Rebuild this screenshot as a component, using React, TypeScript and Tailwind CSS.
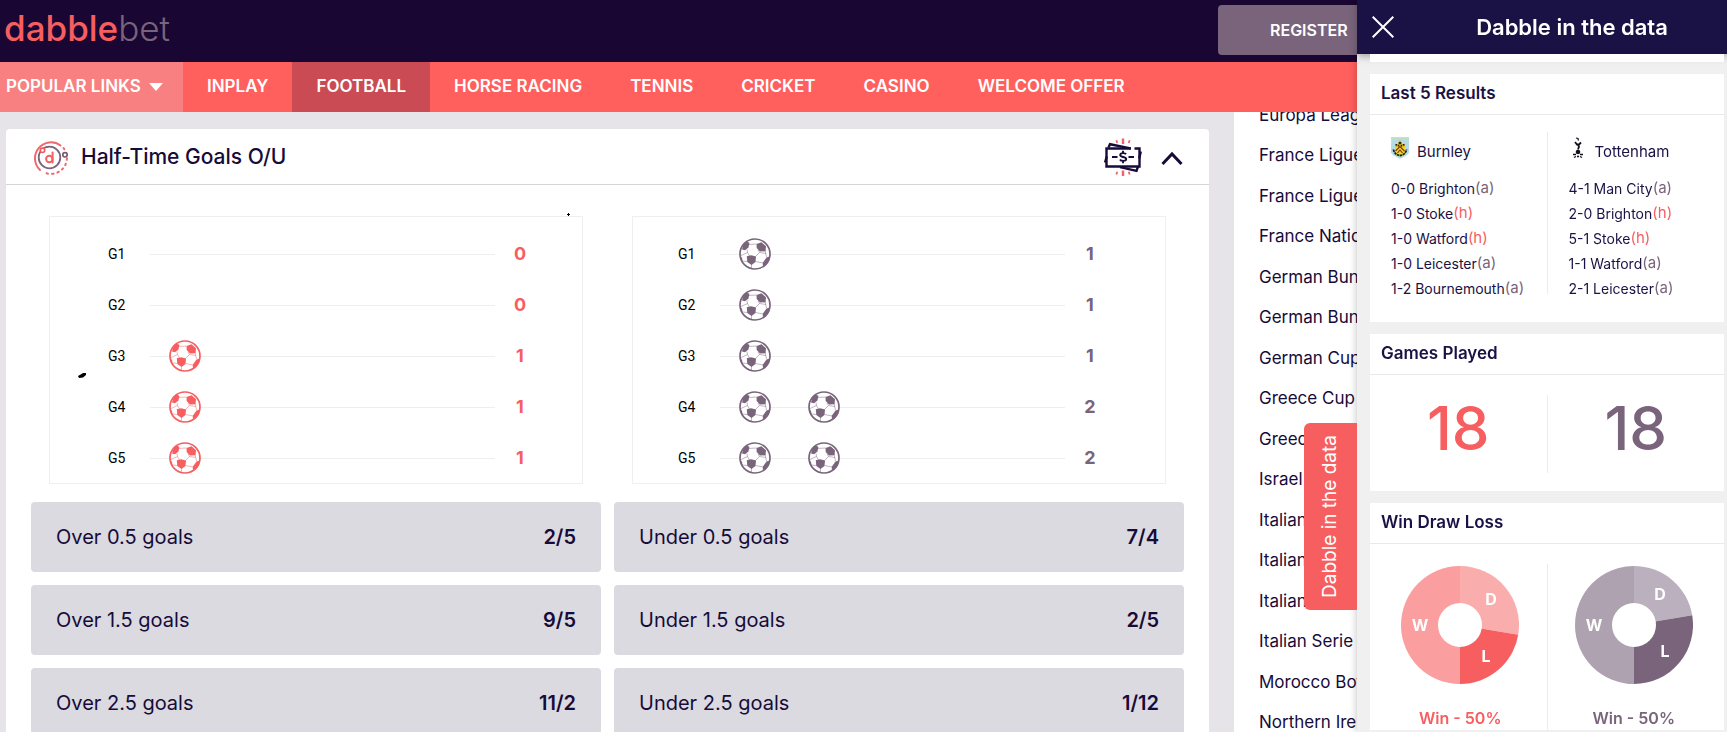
import React, { useState } from "react";
import clsx from "clsx";

interface Selection {
  name: string;
  odds: string;
}

interface Result {
  text: string;
  venue: "a" | "h";
}

const navLinks = ["INPLAY", "FOOTBALL", "HORSE RACING", "TENNIS", "CRICKET", "CASINO", "WELCOME OFFER"];

const competitions = [
  "Europa League",
  "France Ligue 1",
  "France Ligue 2",
  "France National",
  "German Bundesliga",
  "German Bundesliga 2",
  "German Cup",
  "Greece Cup",
  "Greece Super League",
  "Israel Premier",
  "Italian Cup",
  "Italian Serie A",
  "Italian Serie B",
  "Italian Serie C",
  "Morocco Botola",
  "Northern Ireland",
];

const selections: Selection[] = [
  { name: "Over 0.5 goals", odds: "2/5" },
  { name: "Under 0.5 goals", odds: "7/4" },
  { name: "Over 1.5 goals", odds: "9/5" },
  { name: "Under 1.5 goals", odds: "2/5" },
  { name: "Over 2.5 goals", odds: "11/2" },
  { name: "Under 2.5 goals", odds: "1/12" },
];

const burnleyResults: Result[] = [
  { text: "0-0 Brighton", venue: "a" },
  { text: "1-0 Stoke", venue: "h" },
  { text: "1-0 Watford", venue: "h" },
  { text: "1-0 Leicester", venue: "a" },
  { text: "1-2 Bournemouth", venue: "a" },
];

const tottenhamResults: Result[] = [
  { text: "4-1 Man City", venue: "a" },
  { text: "2-0 Brighton", venue: "h" },
  { text: "5-1 Stoke", venue: "h" },
  { text: "1-1 Watford", venue: "a" },
  { text: "2-1 Leicester", venue: "a" },
];

const MarketIcon: React.FC = () => (
  <svg width="36" height="36" viewBox="0 0 36 36" fill="none" aria-hidden="true">
    <path d="M8 31A16 16 0 0 1 28.5 6.500" stroke="#ee686c" strokeWidth="2" strokeLinecap="round" />
    <path
      d="M31.5 9A16 16 0 0 1 11 32.8"
      stroke="#ee686c"
      strokeWidth="2"
      strokeLinecap="round"
      strokeDasharray="1.5 4"
    />
    <circle cx="17.5" cy="18.500" r="10.800" stroke="#7a647d" strokeWidth="1.800" />
    <circle cx="33" cy="15.800" r="2.200" stroke="#6f5d72" strokeWidth="1.700" fill="#fff" />
    <circle cx="10.500" cy="11.300" r="2.200" stroke="#ee5d62" strokeWidth="1.700" fill="#fff" />
    <circle cx="17.3" cy="20" r="3.200" stroke="#f65e60" strokeWidth="2" />
    <path d="M20.600 13.500v10" stroke="#f65e60" strokeWidth="2" strokeLinecap="round" />
  </svg>
);

const CashIcon: React.FC = () => (
  <svg width="38" height="38" viewBox="0 0 38 38" fill="none" aria-hidden="true">
    <g stroke="#ee6468" strokeWidth="1.8">
      <path d="M19 .5v5.500M19 32.500V38" strokeWidth="2.4" />
      <path d="M12.3 2.200l1 2.800M25.700 2.200l-1 2.800M12.300 36.500l1-2.800M25.700 36.500l-1-2.800" />
    </g>
    <g stroke="#170b3a" strokeWidth="2.4">
      <path d="M4.500 9.500L6 6.200l20.500 4.200M1 24.500l1.800-6M34 28.500l-1.500 4.300L16 29.200M36.800 13.500l-1.600 7" />
      <path d="M27 10.500H2.500V28.500h33V10.500h-5" />
      <path d="M8 19h5.500M24.500 19H30" strokeWidth="2" />
      <path d="M22 16.200c-.8-1.400-5.800-1.600-5.800.8 0 2.600 6 1.400 6 4.100 0 2.500-5.300 2.200-6.200.4M19 12.800v2.400M19 22.800v2.400" strokeWidth="1.9" />
    </g>
  </svg>
);

const Football: React.FC<{ color: string }> = ({ color }) => (
  <svg width="32" height="32" viewBox="0 0 32 32" className="relative" aria-hidden="true">
    <circle cx="16" cy="16" r="15" fill="#fff" />
    <g stroke={color} strokeWidth=".8" strokeOpacity=".6" fill="none">
      <path d="M9 6.500L17.500 6M8 11.500L8.500 14.500 10.500 18M19 12L20.500 14.500 16.500 18.500M20.500 14.500L27 15.500M8.500 14.500L2 17.500M8.500 23.500L3.500 23M12.500 26V31M16.500 23.500L24 25M26 12L27.500 19" />
    </g>
    <g fill={color}>
      <path d="M3 11.500L4.500 6.500 7.500 3.600 10.400 4.800 9.500 9.500 6 12.300z" />
      <path d="M17.500 6l5-1.800 4.500 4-.5 5-5.500.3-3.300-3.500z" />
      <path d="M7.800 18.200l4.400-1 4.800 1.200-.5 5.700-4 2.800-4.200-3z" />
      <path d="M23.800 24.800l3.700-5.300 3.300-1-.8 4.800-4 5-2.200-.8z" />
      <path d="M1 17l2 3.200.7 4.600-1.700-2z" />
    </g>
    <circle cx="16" cy="16" r="15" fill="none" stroke={color} strokeWidth="1.700" />
  </svg>
);

const BurnleyBadge: React.FC = () => (
  <svg width="18" height="22" viewBox="0 0 18 22" aria-hidden="true">
    <path d="M0 0h18v15c0 3-5 4.500-9 7-4-2.500-9-4-9-7z" fill="#b5dce4" />
    <path d="M0 0h18v1.200H1V9H0z" fill="#e6e36a" />
    <path d="M4 9h10v7c-1 2-3 3-5 3.500C7 19 5 18 4 16z" fill="#f2d32c" />
    <path d="M4.500 7H7V5h1.500V3.500h1V5H11v2h2.500v2.500h-9z" fill="#b29a1f" />
    <path d="M4.500 7H6v1.500H4.500zM8 5h2v2H8zM12 7h1.500v1.500H12zM7 8h1v1.500H7zM10 8h1v1.500h-1z" fill="#2b2412" />
    <path d="M4.500 14L9 9.500l4.500 4.500M6.500 16L9 13l2.500 3" stroke="#7a3318" strokeWidth="1.100" fill="none" />
    <path d="M2.500 12.500c.5 4 4 6 6.500 6s6-2 6.500-6" stroke="#172318" strokeWidth="1.800" strokeDasharray="2.500 .6" fill="none" />
  </svg>
);

const TottenhamBadge: React.FC = () => (
  <svg width="12" height="22" viewBox="0 0 12 22" fill="none" stroke="#12121f" aria-hidden="true">
    <path d="M4 1l2 .5.500 2" strokeWidth="1.200" />
    <path d="M3 5l2 2.500h2L9 5.500M5.500 7l1.500 2.500L6 12.500" strokeWidth="1.800" />
    <circle cx="6" cy="15" r="2.300" fill="#12121f" stroke="none" />
    <path d="M1 17.500h3M8 17.500h3M2 20.500l2-1M10 20.500l-2-1M5 19.500h2" strokeWidth="1.300" />
  </svg>
);

interface DonutProps {
  win: string;
  draw: string;
  loss: string;
  splitX: number;
  splitY: number;
  labelD: [number, number];
  labelL: [number, number];
}

const Donut: React.FC<DonutProps> = ({ win, draw, loss, splitX, splitY, labelD, labelL }) => (
  <svg
    width="118"
    height="118"
    viewBox="0 0 118 118"
    className="font-[Inter,sans-serif] text-base font-bold"
    role="img"
    aria-label="Win draw loss"
  >
    <path d="M59 0A59 59 0 0 0 59 118Z" fill={win} />
    <path d={`M59 59V0A59 59 0 0 1 ${splitX} ${splitY}Z`} fill={draw} />
    <path d={`M59 59L${splitX} ${splitY}A59 59 0 0 1 59 118Z`} fill={loss} />
    <circle cx="59" cy="59" r="22" fill="#fff" />
    <g fill="#fff" textAnchor="middle">
      <text x="19" y="65">W</text>
      <text x={labelD[0]} y={labelD[1]}>D</text>
      <text x={labelL[0]} y={labelL[1]}>L</text>
    </g>
  </svg>
);

const GoalsChart: React.FC<{ goals: number[]; away?: boolean }> = ({ goals, away }) => (
  <div
    className={clsx(
      "mx-[18px] border border-[#efefef] pt-[11px]",
      away ? "pr-[50px] pl-[45px]" : "pr-[37px] pl-[58px]"
    )}
  >
    {goals.map((count, i) => (
      <div key={i} className="flex h-[51px] items-center">
        <span className="w-[42px] font-[Roboto,sans-serif] text-sm text-black">G{i + 1}</span>
        <div className="relative grid flex-1 grid-cols-5 items-center justify-items-center">
          <div className="absolute top-1/2 h-px w-full bg-[#eeeeee]" />
          {Array.from({ length: count }, (_, n) => (
            <Football key={n} color={away ? "#79647c" : "#f65e60"} />
          ))}
        </div>
        <span
          className={clsx("w-[50px] text-center text-lg font-bold", away ? "text-[#79647c]" : "text-[#f65e60]")}
        >
          {count}
        </span>
      </div>
    ))}
  </div>
);

const DataCard: React.FC<{ title: string; children: React.ReactNode }> = ({ title, children }) => (
  <section className="bg-white">
    <h3 className="flex h-[41px] items-center border-b border-[#e9e9ec] px-[11px] text-[17px] font-semibold">
      {title}
    </h3>
    {children}
  </section>
);

const TeamResults: React.FC<{ team: string; badge: React.ReactNode; results: Result[] }> = ({
  team,
  badge,
  results,
}) => (
  <div className="flex-1 pl-[21px]">
    <div className="mb-1 flex h-10 items-center gap-2">
      <span className="flex w-[18px] justify-center pb-2">{badge}</span>
      <span className="text-[15px]">{team}</span>
    </div>
    <ul className="text-sm leading-[25px] whitespace-nowrap">
      {results.map((result) => (
        <li key={result.text} className="flex">
          {result.text}
          <span
            className={clsx(
              "-mt-px text-[15px]",
              result.venue === "h" ? "text-[#f65e60]" : "text-[#79647c]"
            )}
          >
            ({result.venue})
          </span>
        </li>
      ))}
    </ul>
  </div>
);

const DataDrawer: React.FC<{ onClose: () => void }> = ({ onClose }) => (
  <aside className="fixed inset-y-0 right-0 flex w-[370px] flex-col overflow-hidden bg-[#f0f0f0] text-[#1a1145] shadow-[0_0_8px_rgba(0,0,0,0.25)]">
    <header className="relative flex h-[54px] shrink-0 items-center bg-[#1a1145] text-white shadow-[0_2px_8px_rgba(0,0,0,0.35)]">
      <button type="button" onClick={onClose} aria-label="Close" className="w-[60px] pl-[15px]">
        <svg width="22" height="22" viewBox="0 0 22 22" stroke="#fff" strokeWidth="2" aria-hidden="true">
          <path d="M.7.7l20.600 20.600M21.300.7L.7 21.300" />
        </svg>
      </button>
      <h2 className="flex-1 text-center text-[22px] font-semibold">Dabble in the data</h2>
    </header>
    <div className="relative flex shrink-0 flex-col gap-3 pr-[3px] pl-[13px]">
      <div className="h-2 bg-white" />
      <DataCard title="Last 5 Results">
        <div className="flex h-[207px] pt-[17px] pb-7">
          <TeamResults team="Burnley" badge={<BurnleyBadge />} results={burnleyResults} />
          <div className="w-px bg-[#ececef]" />
          <TeamResults team="Tottenham" badge={<TottenhamBadge />} results={tottenhamResults} />
        </div>
      </DataCard>
      <DataCard title="Games Played">
        <div className="flex pt-5 pb-[18px] text-center text-6xl font-medium">
          <div className="flex-1 pb-3 leading-[66px] text-[#f65e60]">18</div>
          <div className="w-px bg-[#ececef]" />
          <div className="flex-1 pb-3 leading-[66px] text-[#79647c]">18</div>
        </div>
      </DataCard>
      <DataCard title="Win Draw Loss">
        <div className="flex pt-5 font-semibold">
          <div className="flex flex-1 flex-col items-center gap-[22px] pt-[2px] pl-1 text-[#f65e60]">
            <Donut
              win="#fa9e9f"
              draw="#faadad"
              loss="#f65e60"
              splitX={117.2}
              splitY={68.8}
              labelD={[90, 39]}
              labelL={[85, 96]}
            />
            Win - 50%
          </div>
          <div className="w-px bg-[#ececef]" />
          <div className="flex flex-1 flex-col items-center gap-[22px] pt-[2px] pr-1 text-[#79647c]">
            <Donut
              win="#afa2b0"
              draw="#bbb0bd"
              loss="#79647c"
              splitX={117.2}
              splitY={49.2}
              labelD={[85, 34]}
              labelL={[90, 91]}
            />
            Win - 50%
          </div>
        </div>
      </DataCard>
    </div>
  </aside>
);

const App: React.FC = () => {
  const [drawerOpen, setDrawerOpen] = useState(true);
  const [expanded, setExpanded] = useState(true);

  return (
    <div className="h-screen overflow-hidden bg-[#e6e4e9] font-[Inter,sans-serif] text-[#170b3a]">
      <header className="flex h-[62px] items-start justify-between bg-[#1a0632]">
        <a href="#" className="pl-1 text-[35px] leading-[56px] font-light text-[#79647c]">
          <span className="font-medium text-[#f65e60]">dabble</span>bet
        </a>
        <div className="w-[509px] pt-[5px]">
          <button type="button" className="h-[50px] rounded-sm bg-[#79647c] px-[52px] text-base font-semibold text-white">
            REGISTER
          </button>
        </div>
      </header>

      <nav className="flex h-[50px] bg-[#ff5f5d] text-[17px] font-semibold text-white">
        <button type="button" className="flex w-[183px] items-center gap-2 bg-[#f98080] pl-[6px] whitespace-nowrap">
          POPULAR LINKS
          <svg width="14" height="8" viewBox="0 0 14 8" fill="#fff" aria-hidden="true">
            <path d="M0 0h14L7 8z" />
          </svg>
        </button>
        {navLinks.map((link) => (
          <a
            key={link}
            href="#"
            className={clsx("flex items-center px-6", link === "FOOTBALL" && "bg-[#cb4b54]")}
          >
            {link}
          </a>
        ))}
      </nav>

      <div className="flex pl-[6px]">
        <main className="mt-[17px] mr-[25px] flex-1 rounded-sm bg-white">
          <div className="flex h-[56px] items-center border-b border-[#d5d5d8] px-[26px]">
            <MarketIcon />
            <h1 className="ml-[13px] flex-1 text-[21px] font-medium">Half-Time Goals O/U</h1>
            <CashIcon />
            <button
              type="button"
              aria-label="Toggle market"
              onClick={() => setExpanded(!expanded)}
              className="ml-[19px]"
            >
              <svg width="22" height="18" viewBox="0 0 22 18" fill="none" stroke="#170b3a" strokeWidth="3" aria-hidden="true">
                <path d="M1.500 16L11 6l9.500 10" />
              </svg>
            </button>
          </div>
          {expanded && (
            <div className="relative px-[25px] pt-[31px]">
              <div className="grid grid-cols-2 gap-[13px]">
                <GoalsChart goals={[0, 0, 1, 1, 1]} />
                <GoalsChart goals={[1, 1, 1, 2, 2]} away />
              </div>
              <svg width="8" height="5" viewBox="0 0 8 5" className="absolute top-[188px] left-[72px]" aria-hidden="true">
                <path d="M0 3L3.500 1 5 0h3v2L5 4.500 1 5z" fill="#000" />
              </svg>
              <svg width="3" height="3" viewBox="0 0 3 3" className="absolute top-[28px] left-[561px]" aria-hidden="true">
                <path d="M1 0h1v1h1v1H2v1H1V2H0V1h1z" fill="#000" />
              </svg>
              <div className="mt-[18px] grid grid-cols-2 gap-x-[13px] gap-y-[13px]">
                {selections.map((item) => (
                  <button
                    key={item.name}
                    type="button"
                    className="flex h-[70px] items-center justify-between rounded-sm bg-[#dadae0] px-[25px] text-xl"
                  >
                    <span>{item.name}</span>
                    <span className="font-semibold">{item.odds}</span>
                  </button>
                ))}
              </div>
            </div>
          )}
        </main>

        <div className="h-[620px] w-[493px] overflow-hidden bg-white">
          <ul className="-mt-[17px] flex h-[648px] flex-col pl-[25px] text-[17px]">
            {competitions.map((name) => (
              <li key={name} className="flex flex-1 items-center">
                <a href="#">{name}</a>
              </li>
            ))}
          </ul>
        </div>
      </div>

      {drawerOpen && <DataDrawer onClose={() => setDrawerOpen(false)} />}
      <button
        type="button"
        onClick={() => setDrawerOpen(!drawerOpen)}
        className={clsx(
          "fixed top-[423px] flex h-[187px] w-[53px] items-center justify-center rounded-l-md bg-[#f65e60] text-[19px] text-white",
          drawerOpen ? "right-[370px]" : "right-0"
        )}
      >
        <span className="rotate-180 whitespace-nowrap [writing-mode:vertical-rl]">Dabble in the data</span>
      </button>
    </div>
  );
};

export default App;
